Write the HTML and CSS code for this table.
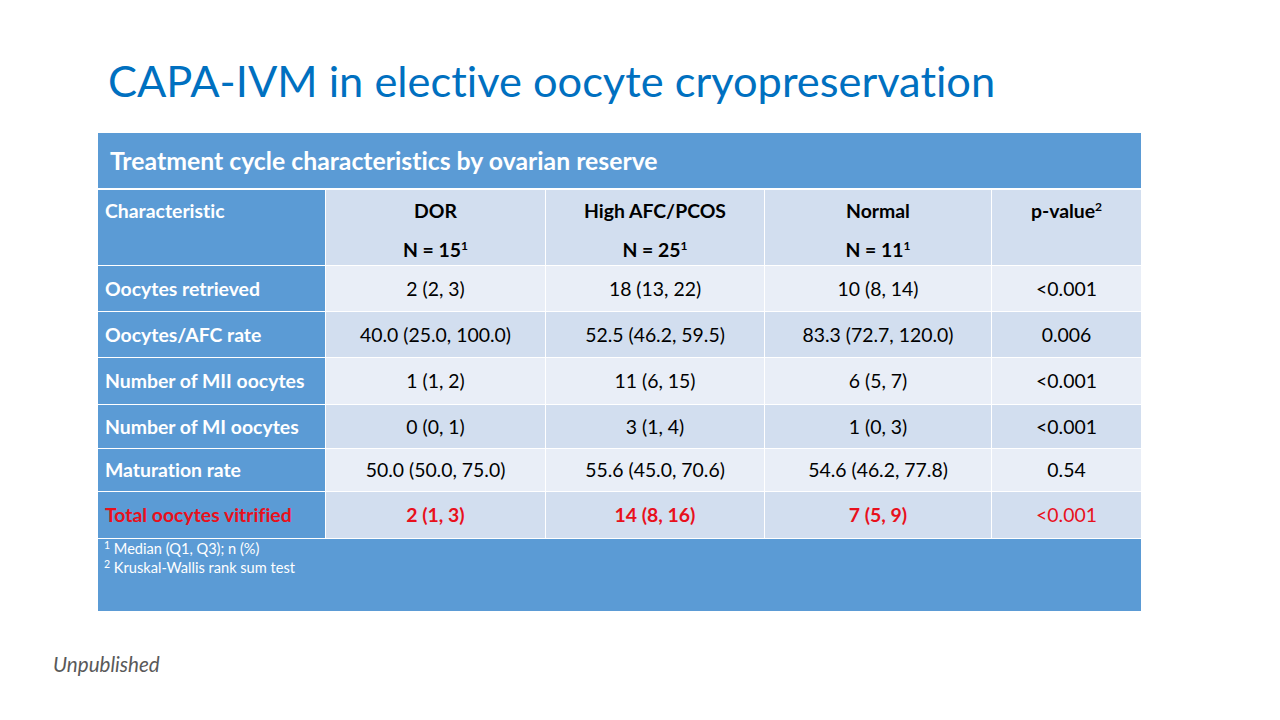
FILE: index.html
```html
<!DOCTYPE html>
<html lang="en">
<head>
<meta charset="utf-8">
<title>CAPA-IVM in elective oocyte cryopreservation</title>
<link rel="stylesheet" href="styles.css">
</head>
<body>
<div class="slide">
  <h1 class="title">CAPA-IVM in elective oocyte cryopreservation</h1>
  <table class="data">
    <colgroup>
      <col class="c1"><col class="c2"><col class="c3"><col class="c4"><col class="c5">
    </colgroup>
    <tr class="band"><td colspan="5">Treatment cycle characteristics by ovarian reserve</td></tr>
    <tr class="head">
      <td class="lab">Characteristic</td>
      <td>DOR<br><br>N = 15<sup>1</sup></td>
      <td>High AFC/PCOS<br><br>N = 25<sup>1</sup></td>
      <td>Normal<br><br>N = 11<sup>1</sup></td>
      <td>p-value<sup>2</sup></td>
    </tr>
    <tr class="r1 light">
      <td class="lab">Oocytes retrieved</td><td>2 (2, 3)</td><td>18 (13, 22)</td><td>10 (8, 14)</td><td>&lt;0.001</td>
    </tr>
    <tr class="r2 dark">
      <td class="lab">Oocytes/AFC rate</td><td>40.0 (25.0, 100.0)</td><td>52.5 (46.2, 59.5)</td><td>83.3 (72.7, 120.0)</td><td>0.006</td>
    </tr>
    <tr class="r3 light">
      <td class="lab">Number of MII oocytes</td><td>1 (1, 2)</td><td>11 (6, 15)</td><td>6 (5, 7)</td><td>&lt;0.001</td>
    </tr>
    <tr class="r4 dark">
      <td class="lab">Number of MI oocytes</td><td>0 (0, 1)</td><td>3 (1, 4)</td><td>1 (0, 3)</td><td>&lt;0.001</td>
    </tr>
    <tr class="r5 light">
      <td class="lab">Maturation rate</td><td>50.0 (50.0, 75.0)</td><td>55.6 (45.0, 70.6)</td><td>54.6 (46.2, 77.8)</td><td>0.54</td>
    </tr>
    <tr class="r6 dark total">
      <td class="lab">Total oocytes vitrified</td><td>2 (1, 3)</td><td>14 (8, 16)</td><td>7 (5, 9)</td><td class="pv">&lt;0.001</td>
    </tr>
    <tr class="foot">
      <td colspan="5"><sup>1</sup> Median (Q1, Q3); n (%)<br><sup>2</sup> Kruskal-Wallis rank sum test</td>
    </tr>
  </table>
  <p class="note">Unpublished</p>
</div>
</body>
</html>
```

FILE: styles.css
```css
html, body {
  margin: 0;
  padding: 0;
  background: #ffffff;
}
.slide {
  width: 1280px;
  height: 720px;
  font-family: Lato, "Open Sans", sans-serif;
  font-variant-ligatures: none;
  overflow: hidden;
}
.title {
  margin: 54px 0 0 108px;
  font-size: 43.4px;
  font-weight: 400;
  line-height: 52px;
  color: #0070c0;
  height: 79px;
}
.data {
  margin-left: 98px;
  width: 1043px;
  table-layout: fixed;
  border-collapse: separate;
  border-spacing: 0;
  font-size: 19.4px;
  color: #000;
}
.c1 { width: 228px; }
.c2 { width: 220px; }
.c3 { width: 219px; }
.c4 { width: 227px; }
.c5 { width: 149px; }
.data td {
  padding: 0;
  text-align: center;
  vertical-align: middle;
  border-right: 1px solid #ffffff;
  border-bottom: 1px solid #ffffff;
  line-height: 19.5px;
}
.data td:last-child { border-right: 0; }
.data sup {
  font-size: 0.62em;
  line-height: 0;
  vertical-align: 0.55em;
}
.band td {
  background: #5b9bd5;
  color: #ffffff;
  font-weight: 700;
  font-size: 24.8px;
  text-align: left;
  padding-left: 12px;
  height: 55px;
  box-sizing: border-box;
  border-bottom: 2px solid #ffffff;
}
.band { height: 57px; }
.head { height: 76px; }
.head td {
  background: #d2deef;
  font-weight: 700;
  vertical-align: top;
  padding-top: 11px;
}
.data td.lab {
  background: #5b9bd5;
  color: #ffffff;
  font-weight: 700;
  text-align: left;
  padding-left: 7px;
}
.light td { background: #e9eef7; }
.dark td { background: #d2deef; }
.r1 { height: 46px; }
.r2 { height: 46px; }
.r3 { height: 47px; }
.r4 { height: 44px; }
.r5 { height: 43px; }
.r6 { height: 47px; }
.total td {
  color: #e8101c;
  font-weight: 700;
}
.data .total td.lab { color: #e8101c; }
.total td.pv { font-weight: 400; }
.foot { height: 72px; }
.foot td {
  background: #5b9bd5;
  color: #ffffff;
  font-size: 14.6px;
  line-height: 19px;
  text-align: left;
  vertical-align: top;
  padding-left: 6px;
  padding-top: 0;
  border-bottom: 0;
}
.foot sup { font-size: 0.72em; vertical-align: 0.45em; }
.note {
  margin: 41px 0 0 53px;
  font-size: 20.6px;
  font-style: italic;
  color: #595959;
}
```
